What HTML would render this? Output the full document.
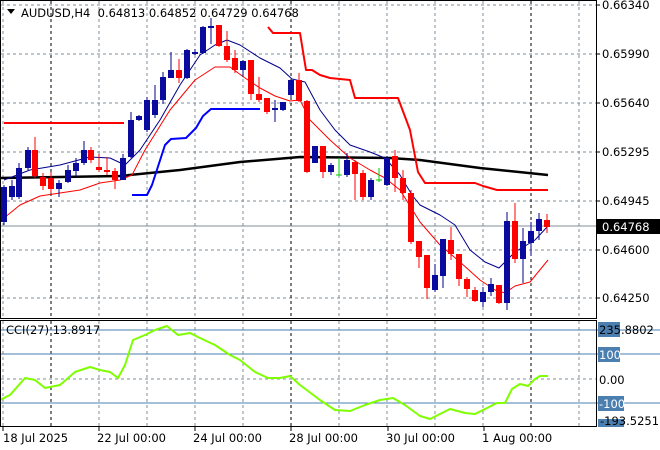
<!DOCTYPE html>
<html><head><meta charset="utf-8"><style>
html,body{margin:0;padding:0;background:#fff;width:660px;height:450px;overflow:hidden}
svg text{font-family:"DejaVu Sans","Liberation Sans",sans-serif;font-size:11.5px;fill:#000}
</style></head><body>
<svg id="s" width="660" height="450" xmlns="http://www.w3.org/2000/svg"></svg>
<script>
const s=document.getElementById('s');let h='';
function L(x1,y1,x2,y2,c,w,d){h+=`<line x1="${x1}" y1="${y1}" x2="${x2}" y2="${y2}" stroke="${c}" stroke-width="${w||1}" ${d?`stroke-dasharray="${d}"`:''} shape-rendering="crispEdges"/>`}
function P(pts,c,w){h+=`<polyline points="${pts.map(p=>p.join(',')).join(' ')}" fill="none" stroke="${c}" stroke-width="${w}" stroke-linejoin="round"/>`}
function T(x,y,t,c,a){h+=`<text x="${x}" y="${y}" ${c?`style="fill:${c}"`:''} ${a?`text-anchor="${a}"`:''}>${t}</text>`}
// grid main
[5,54,103,152,201,250,298].forEach(y=>L(1,y,596,y,'#7f8c99',1,'3,3'));
for(let x=3;x<596;x+=48){const blk=(x===51||x===291||x===531);L(x,1,x,318,blk?'#000':'#7f8c99',1,'3,3');L(x,321,x,426,blk?'#000':'#7f8c99',1,'3,3');}
L(1,379,596,379,'#7f8c99',1,'3,3');
// cci levels
[330,354,403].forEach(y=>L(1,y,660,y,'#4a7fb0',1));
// current price line
L(1,226,596,226,'#7f8c99',1);
// black MA
P([[0,178],[60,177],[120,176],[180,170],[240,162],[300,157],[390,158],[420,160],[480,168],[548,175]],'#000',2.5);
// red step
P([[4,123],[124,123]],'#f00',2);
P([[268,27],[273,33],[300,33],[306,70],[312,70],[320,75],[330,78],[350,80],[355,98],[398,98],[410,130],[418,172],[425,183],[475,183],[483,186],[497,190],[548,190]],'#f00',2);
// blue step
P([[132,195],[147,195],[152,185],[165,145],[171,139],[186,138],[196,128],[203,116],[211,109],[260,109]],'#00f',2);
// navy line
P([[4,180],[30,170],[60,165],[90,157],[110,158],[125,165],[140,150],[160,120],[180,85],[200,55],[215,45],[227,40],[240,45],[260,58],[280,68],[292,79],[305,82],[320,110],[335,130],[350,145],[370,152],[385,158],[400,175],[412,195],[420,205],[440,215],[455,225],[470,250],[485,262],[499,268],[507,260],[515,252],[525,246],[535,240],[548,226]],'#00008b',1);
// red thin
P([[4,218],[20,205],[40,196],[60,193],[80,190],[100,183],[120,180],[132,175],[145,150],[170,110],[195,80],[215,67],[230,67],[245,78],[260,88],[275,96],[290,101],[300,100],[310,120],[330,140],[350,158],[370,170],[385,178],[400,190],[420,222],[440,245],[460,262],[480,280],[495,290],[505,293],[515,286],[530,282],[548,260]],'#f00',1);
// candles [x, open, close, high, low]  (y coords)
const C=[[4,222,187,185,225],[12,197,186,180,200],[19,197,168,163,199],[28,168,150,147,170],[35,150,176,137,178],[43,177,186,173,190],[51,178,189,172,193],[59,189,183,180,197],[68,182,170,165,183],[76,171,163,158,177],[84,163,150,141,165],[91,150,160,147,163],[99,167,170,154,172],[107,170,172,157,175],[115,171,180,168,189],[123,180,158,154,180],[131,157,120,112,158],[139,120,116,115,121],[147,130,100,97,132],[155,115,100,85,118],[163,100,77,72,104],[171,78,70,52,78],[179,70,78,59,83],[187,78,50,49,79],[195,54,52,49,55],[203,53,27,26,54],[211,28,26,18,44],[219,25,46,25,47],[227,46,60,31,62],[235,58,70,50,73],[243,70,61,60,77],[251,60,94,60,100],[259,94,100,77,102],[267,98,112,98,114],[275,110,108,100,122],[283,110,102,102,111],[291,95,80,80,97],[299,80,101,73,102],[307,101,172,100,173],[315,163,146,146,163],[323,146,172,146,178],[331,172,165,163,175],[339,175,175,158,175,'#0c0'],[347,175,160,153,177],[355,162,174,160,200],[363,173,197,170,200],[371,197,180,178,200],[379,180,180,168,182,'#0c0'],[387,185,158,156,186],[395,156,178,150,192],[403,178,193,170,200],[411,193,242,190,244],[419,241,257,241,268],[427,255,288,255,299],[435,290,275,264,292],[443,276,239,239,288],[451,240,254,227,260],[459,254,279,254,286],[467,279,289,277,297],[475,290,301,287,302],[483,302,292,287,307],[491,292,284,278,296],[499,285,303,285,304],[507,303,221,212,310],[515,221,259,203,263],[523,259,241,228,283],[531,243,231,222,256],[539,231,219,213,240],[547,220,227,214,233]];
C.forEach(c=>{const[x,o,cl,hi,lo,col0]=c;const col=col0||(cl<o?'#00008b':'#f00');const w=col0?1:1;
L(x,hi,x,lo,col0||(cl<o?'#00008b':'#f00'),1);
if(col0){L(x-3,o,x+3,o,col0,1);}else{const t=Math.min(o,cl),b=Math.max(o,cl);h+=`<rect x="${x-3}" y="${t}" width="6" height="${Math.max(1,b-t)}" fill="${cl<o?'#0a0a9e':'#f00'}"/>`;}});
// CCI
P([[0,400],[10,395],[25,378],[35,380],[45,388],[60,385],[75,372],[90,367],[100,370],[110,372],[118,378],[125,365],[133,340],[145,335],[155,330],[167,326],[178,335],[190,333],[200,338],[215,345],[230,355],[240,360],[255,372],[268,378],[280,378],[290,376],[300,385],[320,400],[335,410],[350,411],[365,405],[380,400],[393,398],[405,405],[420,416],[430,419],[440,414],[450,409],[465,413],[475,414],[485,409],[497,403],[505,403],[512,389],[520,384],[528,386],[535,379],[540,376],[548,376]],'#7fff00',2);
// frames
h+=`<rect x="0.5" y="0.5" width="596" height="318" fill="none" stroke="#000"/>`;
h+=`<rect x="0.5" y="320.5" width="596" height="106" fill="none" stroke="#000"/>`;
// right axis
[[5,'0.66340'],[54,'0.65990'],[103,'0.65640'],[152,'0.65295'],[201,'0.64945'],[250,'0.64600'],[298,'0.64250']].forEach(([y,t])=>{L(596,y,600,y,'#000');T(602,y+4,t)});
h+=`<rect x="597" y="219" width="63" height="15" fill="#000"/>`;T(602,231,'0.64768','#fff');
h+=`<rect x="598" y="322" width="22" height="15" fill="#4a7fb0"/>`;T(599,334,'235.8802');
h+=`<rect x="598" y="347" width="22" height="15" fill="#4a7fb0"/>`;T(599,359,'100','#fff');
T(599,384,'0.00');
h+=`<rect x="598" y="396" width="26" height="15" fill="#4a7fb0"/>`;T(599,408,'-100','#fff');
h+=`<rect x="598" y="419" width="26" height="8" fill="#4a7fb0"/>`;T(600,425,'-193.5251');
// time axis
[[3,'18 Jul 2025'],[97,'22 Jul 00:00'],[193,'24 Jul 00:00'],[289,'28 Jul 00:00'],[386,'30 Jul 00:00'],[482,'1 Aug 00:00']].forEach(([x,t])=>{T(x,442,t);L(x+(x===3?0:2),427,x+(x===3?0:2),431,'#000')});
// header
h+=`<polygon points="7,9 15,9 11,14" fill="#000"/>`;
T(21,17,'AUDUSD,H4&#160;&#160;0.64813 0.64852 0.64729 0.64768');
T(6,334,'CCI(27) 13.8917');
s.innerHTML=h;
</script>
</body></html>
